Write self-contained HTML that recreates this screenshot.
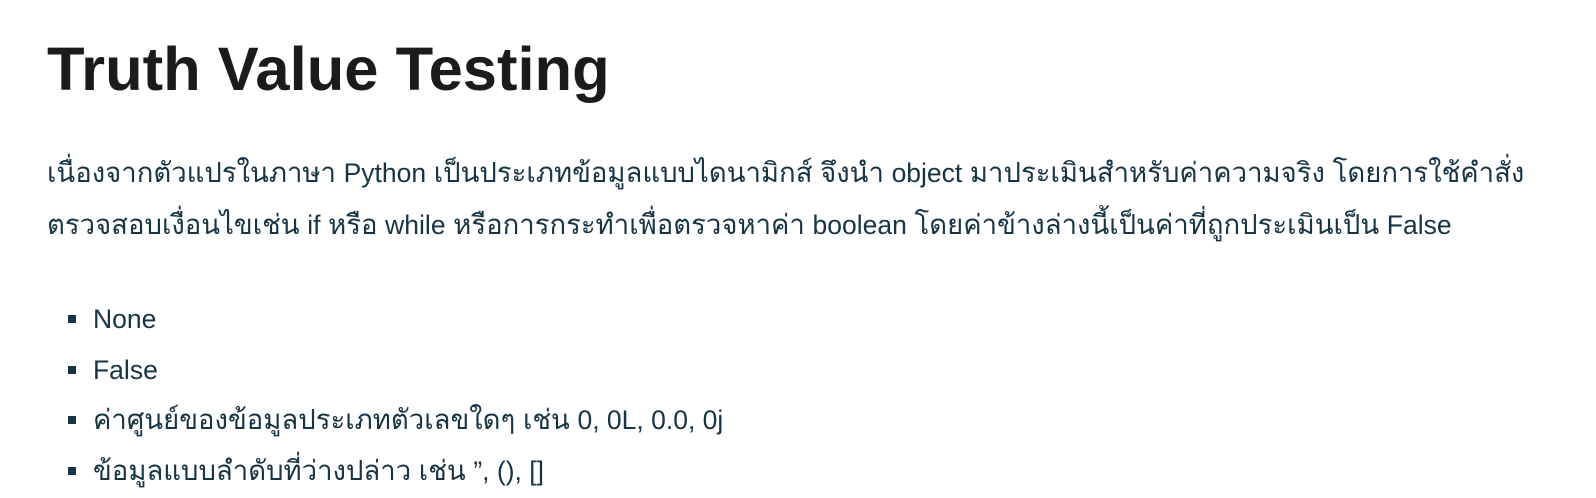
<!DOCTYPE html>
<html><head><meta charset="utf-8"><style>
body{margin:0;background:#fff;width:1596px;height:498px;overflow:hidden;font-family:"Liberation Sans",sans-serif;}
h1{position:absolute;left:47px;top:30px;margin:0;font-size:61.5px;font-weight:bold;color:#1b1b1b;line-height:80px;}
p{position:absolute;left:47px;top:147px;margin:0;width:1540px;font-size:27.5px;line-height:51px;color:#173544;white-space:nowrap;}
.l{font-size:26.5px;}
ul{position:absolute;left:0;top:294px;margin:0;padding:0;list-style:none;font-size:27.5px;color:#173544;}
li{position:relative;height:50.5px;line-height:50px;padding-left:93px;}
li:before{content:"";position:absolute;left:68px;top:21px;width:8px;height:8px;background:#173544;}
</style></head><body>
<h1>Truth Value Testing</h1>
<p>เนื่องจากตัวแปรในภาษา <span class="l">Python</span> เป็นประเภทข้อมูลแบบไดนามิกส์ จึงนำ <span class="l">object</span> มาประเมินสำหรับค่าความจริง โดยการใช้คำสั่ง<br>ตรวจสอบเงื่อนไขเช่น <span class="l">if</span> หรือ <span class="l">while</span> หรือการกระทำเพื่อตรวจหาค่า <span class="l">boolean</span> โดยค่าข้างล่างนี้เป็นค่าที่ถูกประเมินเป็น <span class="l">False</span></p>
<ul>
<li><span class="l">None</span></li>
<li><span class="l">False</span></li>
<li>ค่าศูนย์ของข้อมูลประเภทตัวเลขใดๆ เช่น <span class="l">0, 0L, 0.0, 0j</span></li>
<li>ข้อมูลแบบลำดับที่ว่างปล่าว เช่น <span class="l">”, (), []</span></li>
</ul>
</body></html>
